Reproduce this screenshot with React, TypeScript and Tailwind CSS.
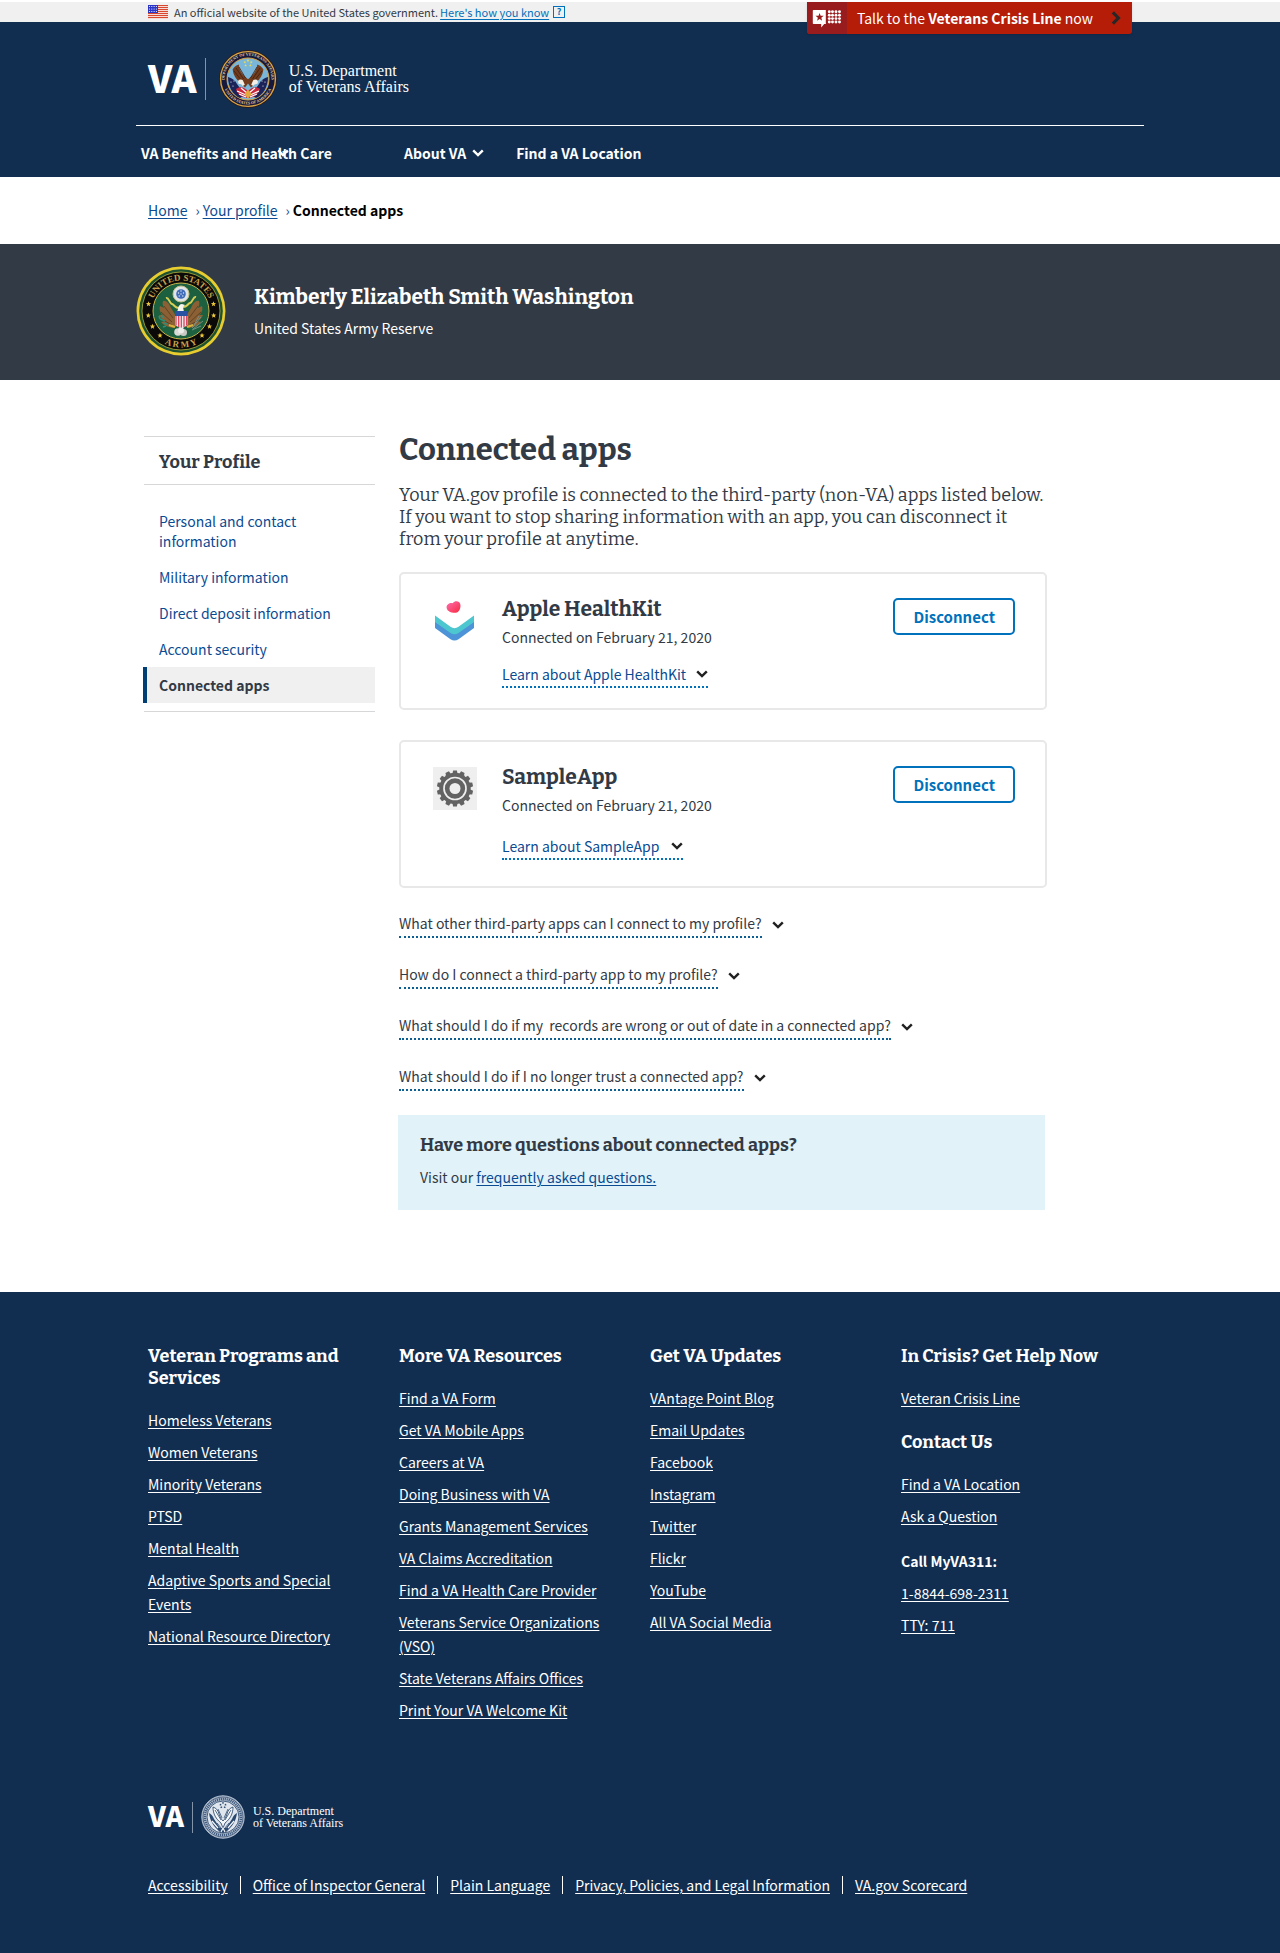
import React from "react";

const SERIF = "font-['Bitter','Noto_Serif','DejaVu_Serif_Condensed',serif]";
const WORDMARK = "font-['Liberation_Serif',serif]";

function Chevron({ className = "" }: { className?: string }) {
  return (
    <svg viewBox="0 0 12 8" className={`h-2 w-3 shrink-0 ${className}`} fill="none" stroke="currentColor" strokeWidth="2.4" aria-hidden="true">
      <path d="M1.2 1.3 6 6.1l4.8-4.8" />
    </svg>
  );
}

function star(cx: number, cy: number, r: number) {
  const pts: string[] = [];
  for (let i = 0; i < 10; i++) {
    const a = -Math.PI / 2 + (i * Math.PI) / 5;
    const q = i % 2 ? r * 0.42 : r;
    pts.push(`${(cx + q * Math.cos(a)).toFixed(2)},${(cy + q * Math.sin(a)).toFixed(2)}`);
  }
  return pts.join(" ");
}

function Flag() {
  return (
    <svg viewBox="0 0 20 14" className="h-3.5 w-5 shrink-0" aria-hidden="true">
      <rect width="20" height="14" fill="#fff" />
      {[0, 2, 4, 6, 8, 10, 12].map((y) => (
        <rect key={y} y={y} width="20" height="1.2" fill="#d8482f" />
      ))}
      <rect width="10" height="8" fill="#2a35c8" />
      {[1.5, 4, 6.5].map((y) =>
        [1.5, 3.8, 6.1, 8.4].map((x) => <circle key={`${x}-${y}`} cx={x} cy={y} r="0.6" fill="#fff" />)
      )}
    </svg>
  );
}

function VaSeal() {
  return (
    <svg viewBox="0 0 58 58" className="size-[58px] shrink-0" role="img" aria-label="Department of Veterans Affairs seal">
      <defs>
        <path id="va-top" d="M5.6 29a23.4 23.4 0 0 1 46.8 0" />
        <path id="va-bottom" d="M3.6 29a25.4 25.4 0 0 0 50.8 0" />
      </defs>
      <circle cx="29" cy="29" r="29" fill="#2a1d22" />
      <circle cx="29" cy="29" r="27.4" fill="#16193c" stroke="#d9a441" strokeWidth="1.4" />
      <circle cx="29" cy="29" r="21" fill="#79b6d9" stroke="#d9a441" strokeWidth="1" />
      <text fill="#e6d3a0" className="font-['Liberation_Serif',serif] text-[4px] font-bold">
        <textPath href="#va-top" startOffset="50%" textAnchor="middle">DEPARTMENT OF VETERANS AFFAIRS</textPath>
      </text>
      <text fill="#e6d3a0" className="font-['Liberation_Serif',serif] text-[4px] font-bold">
        <textPath href="#va-bottom" startOffset="50%" textAnchor="middle">UNITED STATES OF AMERICA</textPath>
      </text>
      {[[29, 10.5], [25.8, 12.2], [32.2, 12.2], [26.6, 15.4], [31.4, 15.4]].map(([x, y]) => (
        <polygon key={`${x}`} points={star(x, y, 1.5)} fill="#f2dd4e" />
      ))}
      <path d="M9 27c4 1 7 3 9 7l8 11-5 3C14 45 9 37 9 27zM49 27c-4 1-7 3-9 7l-8 11 5 3c7-3 12-11 12-21z" fill="#1c2358" />
      {[[12, 32], [14, 36], [46, 32], [44, 36], [15, 31], [43, 31]].map(([x, y]) => (
        <circle key={`${x}-${y}`} cx={x} cy={y} r="0.6" fill="#fff" />
      ))}
      <path d="M17 39c4-3 8-2 12 2 4-4 8-5 12-2-1 5-6 9-12 9s-11-4-12-9z" fill="#c9273b" />
      <path d="m18 41 9 4M20 44l7 3M40 41l-9 4M38 44l-7 3M22 38l6 5M36 38l-6 5" stroke="#fff" strokeWidth="1.2" />
      <path d="M13.6 19.5c1.400-2.500 3.700-4.400 6.200-4.900.5 6 3.700 10.400 9.200 14.600 5.500-4.200 8.700-8.600 9.200-14.600 2.500.5 4.800 2.400 6.200 4.900-.8 5.800-3.200 9.400-6.800 12.600L32 37.500l-3-4-3 4-5.600-5.400c-3.600-3.200-6-6.800-6.800-12.600z" fill="#703c1d" />
      <path d="m17 18 7.500 11M20 17l6.500 11M41 18l-7.500 11M38 17l-6.500 11M15 21l8 10M43 21l-8 10" stroke="#3d1f10" strokeWidth="0.8" />
      <path d="M19 31c.7-1.700 3.500-2.200 4.800-.8l2 4.500-2.100 1.300c-1-1.500-2-2.200-4.200-2.300zM39 31c-.7-1.700-3.500-2.200-4.800-.8l-2 4.500 2.100 1.300c1-1.500 2-2.200 4.200-2.300z" fill="#f3efe6" />
      <path d="m25.500 44 3.500 5 3.500-5-3.500-4.500z" fill="#e3a93a" />
    </svg>
  );
}

function VaSealMono() {
  return (
    <svg viewBox="0 0 44 44" className="size-11 shrink-0" role="img" aria-label="Department of Veterans Affairs seal">
      <circle cx="22" cy="22" r="21.200" fill="#b3bfd0" stroke="#b3bfd0" />
      <circle cx="22" cy="22" r="20" fill="none" stroke="#1f3c61" strokeWidth="0.7" />
      <circle cx="22" cy="22" r="18" fill="none" stroke="#3f5a7e" strokeWidth="2.400" strokeDasharray="1.200 .8" />
      <circle cx="22" cy="22" r="16" fill="#dfe6ee" stroke="#1f3c61" strokeWidth="0.8" />
      <path d="M8 18c1 8 5 14 11 19l3 1 3-1c6-5 10-11 11-19-2 1-4 3-5 6l-6 9h-6l-6-9c-1-3-3-5-5-6z" fill="#2c4a70" />
      <path d="M12 12c0 7 3 12 8 16l2 5 2-5c5-4 8-9 8-16-3 1-5 3-6 7-1 3-2 5-4 7-2-2-3-4-4-7-1-4-3-6-6-7z" fill="#f4f7fa" stroke="#1f3c61" strokeWidth="0.8" />
      <path d="m14 15 6 10M17 14l4 9M30 15l-6 10M27 14l-4 9M13 30l6 5M31 30l-6 5M16 28l4 5M28 28l-4 5" stroke="#2c4a70" strokeWidth="0.8" />
      <path d="M11 26l6 7M33 26l-6 7M20 37l2-4 2 4" stroke="#f4f7fa" strokeWidth="1.200" fill="none" />
      {[[22, 8], [19.5, 9.700], [24.5, 9.700], [20.300, 12.300], [23.700, 12.300]].map(([x, y]) => (
        <polygon key={`${x}`} points={star(x, y, 1.300)} fill="#1f3c61" />
      ))}
    </svg>
  );
}

function ArmySeal() {
  const stars = [[12.5, 38], [12.300, 49.500], [16.500, 60.500], [24, 69.500], [77.500, 38], [77.700, 49.500], [73.500, 60.500], [66, 69.500]];
  return (
    <svg viewBox="0 0 90 90" className="size-[90px] shrink-0" role="img" aria-label="United States Army seal">
      <defs>
        <path id="army-top" d="M14.500 45a30.500 30.500 0 0 1 61 0" />
        <path id="army-bottom" d="M8.500 45a36.500 36.500 0 0 0 73 0" />
      </defs>
      <circle cx="45" cy="45" r="44.500" fill="#e7cd2f" />
      <circle cx="45" cy="45" r="41.800" fill="#1d5131" />
      <circle cx="45" cy="45" r="39" fill="#0b0a08" stroke="#b5b13a" strokeWidth="0.8" />
      <circle cx="45" cy="45" r="28" fill="#1c6040" stroke="#c9b64a" strokeWidth="1" />
      <text fill="#c9a24c" className="font-['Liberation_Serif',serif] text-[9px] font-bold">
        <textPath href="#army-top" startOffset="50%" textAnchor="middle">UNITED STATES</textPath>
      </text>
      <text fill="#c9a24c" className="font-['Liberation_Serif',serif] text-[9px] font-bold">
        <textPath href="#army-bottom" startOffset="50%" textAnchor="middle">A R M Y</textPath>
      </text>
      {stars.map(([x, y]) => (
        <polygon key={`${x}-${y}`} points={star(x, y, 2.800)} fill="#ecc73a" />
      ))}
      <path d="M27 35c3-1 6 2 8 7l5 8 1 10-4 2c-6-1-10-3-12-6l4-1c-3-1-5-4-6-6l4 0c-3-2-4-6-3-9l4 2c-1-2-2-5-1-7zM63 35c-3-1-6 2-8 7l-5 8-1 10 4 2c6-1 10-3 12-6l-4-1c3-1 5-4 6-6l-4 0c3-2 4-6 3-9l-4 2c1-2 2-5 1-7z" fill="#8a6034" />
      <path d="m28 40 9 12M25 46l11 10M27 54l9 5M62 40l-9 12M65 46 54 56M63 54l-9 5" stroke="#5e3f22" strokeWidth="0.9" />
      <path d="M30 32c3-1 3 5 6 6s3 5 8 4M60 31c-3-1-3 5-6 6s-3 5-8 4" stroke="#d9cf55" strokeWidth="2" fill="none" />
      <circle cx="45" cy="28" r="8" fill="#dfe4e6" stroke="#c2c08a" strokeWidth="1" />
      <circle cx="45" cy="28" r="4.800" fill="#3f6cb8" />
      {[[45, 25], [42.500, 27], [47.500, 27], [43.200, 30], [46.800, 30], [45, 28]].map(([x, y]) => (
        <circle key={`${x}-${y}`} cx={x} cy={y} r="0.7" fill="#dfe8f5" />
      ))}
      <path d="M42 43c0-3 2-5 4-5l3 1-2 2 1 5h-7z" fill="#f6f5ef" />
      <path d="M39 45h12.500v5H39z" fill="#2a52a3" />
      <path d="M39 50h12.500v9l-6 4-6.500-4z" fill="#f5e6ea" />
      <path d="M40 50v9.500M42.700 50v11M45.300 50v12.500M48 50v11M50.700 50v9.500" stroke="#d83a56" strokeWidth="1.200" />
      <path d="m33 59 6 2M57 59l-6 2" stroke="#d7b23c" strokeWidth="2.200" />
      <circle cx="42" cy="66" r="3.800" fill="#d9d9d6" />
      <circle cx="47.500" cy="66.500" r="3.500" fill="#c8c8c5" />
      <circle cx="45" cy="64.500" r="3" fill="#ececea" />
      <path d="M25 49l3 3M24 53l5 2M27 57l4 1M30 60l-3 1M23 50l1 3" stroke="#2f8c78" strokeWidth="1.500" />
      <path d="m56 62 9-11M57 63l10-8M57 61l6-11M56 64l9-4" stroke="#7c938a" strokeWidth="0.9" />
    </svg>
  );
}

function HealthIcon() {
  return (
    <svg viewBox="0 0 44 43" className="h-[43px] w-11" aria-hidden="true">
      <defs>
        <linearGradient id="heart" x1="0" y1="0" x2="1" y2="1">
          <stop offset="0" stopColor="#fb6fb0" />
          <stop offset="1" stopColor="#f9293f" />
        </linearGradient>
      </defs>
      <path d="M13.800 9.500c-1.200-3.200 2.400-6.200 6-5.200 2.200-3.200 6.900-2.300 7.500 1 .7 3.400-.8 6.900-3.400 8.300-3.900.9-9.100-.6-10.100-4.100z" fill="url(#heart)" />
      <path d="M2 22.500 17.500 33q4 2.700 8 0L41 22.500v6.500L25.500 40.200q-4 2.700-8 0L2 29z" fill="#4c93d8" />
      <path d="M2 16.500 17.500 27.800q4 2.700 8 0L41 16.500v6.500L25.500 34q-4 2.700-8 0L2 23z" fill="#4cc6cf" />
    </svg>
  );
}

function GearIcon() {
  return (
    <svg viewBox="0 0 44 43" className="h-[43px] w-11" aria-hidden="true">
      <rect width="44" height="43" fill="#f0eff0" />
      <g fill="#636363">
        {Array.from({ length: 14 }, (_, i) => (
          <path key={i} d="m19.200 8 .9-4.600h3.800l.9 4.600z" transform={`rotate(${(i * 360) / 14} 22 21.500)`} />
        ))}
        <circle cx="22" cy="21.500" r="15.700" />
      </g>
      <circle cx="22" cy="21.500" r="11" fill="none" stroke="#f0eff0" strokeWidth="1.700" />
      <circle cx="22" cy="21.500" r="5.500" fill="#f0eff0" />
    </svg>
  );
}

function CrisisIcon() {
  return (
    <svg viewBox="0 0 30 19" className="h-[19px] w-[30px]" fill="#fff" aria-hidden="true">
      <path d="M1.500 1h12.300v14h-1.600l-3 3.600V15H1.500Q.8 15 .8 14.300V1.700Q.8 1 1.500 1z" />
      <polygon points={star(7.600, 8.200, 4.300)} fill="#981b1e" />
      {[2.800, 6.200, 9.600, 13].map((y) => [17.300, 20.500, 24, 27.500].map((x) => <circle key={`${x}-${y}`} cx={x} cy={y} r="1.450" />))}
    </svg>
  );
}

const sideLinks = ["Personal and contact information", "Military information", "Direct deposit information", "Account security"];
const faqs = [
  "What other third-party apps can I connect to my profile?",
  "How do I connect a third-party app to my profile?",
  "What should I do if my\u00a0 records are wrong or out of date in a connected app?",
  "What should I do if I no longer trust a connected app?",
];
const programs = ["Homeless Veterans", "Women Veterans", "Minority Veterans", "PTSD", "Mental Health", "Adaptive Sports and Special Events", "National Resource Directory"];
const resources = ["Find a VA Form", "Get VA Mobile Apps", "Careers at VA", "Doing Business with VA", "Grants Management Services", "VA Claims Accreditation", "Find a VA Health Care Provider", "Veterans Service Organizations (VSO)", "State Veterans Affairs Offices", "Print Your VA Welcome Kit"];
const updates = ["VAntage Point Blog", "Email Updates", "Facebook", "Instagram", "Twitter", "Flickr", "YouTube", "All VA Social Media"];
const legal = ["Accessibility", "Office of Inspector General", "Plain Language", "Privacy, Policies, and Legal Information", "VA.gov Scorecard"];

function FooterHeading({ children }: { children: React.ReactNode }) {
  return <h2 className={`${SERIF} text-lg leading-[22px] font-bold`}>{children}</h2>;
}

function LinkList({ items }: { items: string[] }) {
  return (
    <ul className="mt-[19px] flex flex-col gap-2">
      {items.map((t) => (
        <li key={t}>
          <a href="#" className="underline underline-offset-2">{t}</a>
        </li>
      ))}
    </ul>
  );
}

function AppCard({ name, icon, roomy = false }: { name: string; icon: React.ReactNode; roomy?: boolean }) {
  return (
    <section className={`flex items-start rounded-[5px] border-2 border-[#e8e8e8] pt-[21px] pr-[30px] pl-8 ${roomy ? "pb-[26px]" : "pb-5"}`}>
      <div className="mt-1 shrink-0">{icon}</div>
      <div className="ml-[25px] flex-1">
        <h2 className={`${SERIF} text-[21px] leading-7 font-bold`}>{name}</h2>
        <p className="mt-0.5">Connected on February 21, 2020</p>
        <button
          type="button"
          className={`flex items-center border-b-2 border-dotted border-[#0071bb] text-[#0a4b92] ${roomy ? "mt-[17px] gap-3" : "mt-[13px] gap-2.5"}`}
        >
          Learn about {name}
          <Chevron className="text-[#212121]" />
        </button>
      </div>
      <button type="button" className="mt-[3px] h-[37px] rounded-[5px] border-2 border-[#0071bb] px-[18px] text-[15px] font-bold text-[#0071bb]">
        Disconnect
      </button>
    </section>
  );
}

export default function App() {
  return (
    <div className="bg-white pt-0.5 font-['Noto_Sans_CJK_SC','Noto_Sans',sans-serif] text-sm leading-6 text-[#323a45]">
      <div className="relative bg-[#f0f0f0]">
        <div className="mx-auto flex h-5 max-w-[984px] items-center pb-px text-[11px]">
          <Flag />
          <span className="ml-1.5">An official website of the United States government.</span>
          <a href="#" className="ml-0.5 text-[#0071bb] underline underline-offset-2">Here's how you know</a>
          <span className="ml-1 flex size-3 items-center justify-center border border-[#0071bb] text-[9px] leading-none font-bold text-[#0071bb]">?</span>
        </div>
        <div className="absolute inset-x-0 top-0 z-10 mx-auto flex max-w-[984px] justify-end">
          <a href="#" className="flex h-8 items-stretch overflow-hidden rounded-b-[3px] bg-[#b51d09] text-white shadow">
            <span className="flex w-10 items-center justify-center bg-[#981b1e]">
              <CrisisIcon />
            </span>
            <span className="flex items-center pr-[11px] pl-2.5">
              <span>Talk to the <strong>Veterans Crisis Line</strong> now</span>
              <svg viewBox="0 0 10 14" className="ml-[18px] h-3.5 w-2.5" fill="none" stroke="#2b2626" strokeWidth="3.200" aria-hidden="true">
                <path d="m1.800 1.300 5.600 5.700-5.600 5.700" />
              </svg>
            </span>
          </a>
        </div>
      </div>

      <header className="bg-[#112e51] text-white">
        <div className="mx-auto max-w-[1008px]">
          <div className="flex h-26 items-center border-b border-white pt-2.5 pl-3">
            <span className="pb-1 text-[38px] leading-none font-black">VA</span>
            <span className="ml-2 h-[42px] w-px bg-[#8494a8]" />
            <span className="ml-[13px]">
              <VaSeal />
            </span>
            <span className={`${WORDMARK} ml-3 text-base leading-4`}>
              U.S. Department
              <br />
              of Veterans Affairs
            </span>
          </div>
          <nav className="flex h-[51px] items-center pt-0.5 pl-[5px] font-bold">
            <button type="button" className="relative w-[263px] text-left">
              VA Benefits and Health Care
              <Chevron className="absolute top-2 left-[136px]" />
            </button>
            <button type="button" className="flex items-center gap-1.5">
              About VA
              <Chevron />
            </button>
            <a href="#" className="ml-8">Find a VA Location</a>
          </nav>
        </div>
      </header>

      <nav aria-label="Breadcrumb" className="mx-auto flex h-[67px] max-w-[984px] items-center gap-[3px] pb-0.5 text-[#0a4b92]">
        <a href="#" className="underline underline-offset-2">Home</a>
        <span className="ml-[5px]">›</span>
        <a href="#" className="underline underline-offset-2">Your profile</a>
        <span className="ml-[5px]">›</span>
        <strong className="text-black">Connected apps</strong>
      </nav>

      <div className="bg-[#323a45] text-white">
        <div className="mx-auto flex h-[136px] max-w-[1008px] items-center pb-0.5">
          <ArmySeal />
          <div className="ml-7">
            <p className={`${SERIF} text-[21px] leading-7 font-bold`}>Kimberly Elizabeth Smith Washington</p>
            <p className="mt-[5px]">United States Army Reserve</p>
          </div>
        </div>
      </div>

      <div className="mx-auto flex max-w-[984px] items-start pt-[52px] pb-[82px]">
        <aside className="mt-1 -ml-1 w-[231px] shrink-0 border-y border-[#d6d7d9] pb-2">
          <h2 className={`${SERIF} border-b border-[#d6d7d9] pt-3.5 pb-[11px] pl-[15px] text-lg leading-[22px] font-bold`}>Your Profile</h2>
          <ul className="mt-[18px] leading-5">
            {sideLinks.map((t) => (
              <li key={t}>
                <a href="#" className="block py-2 pr-9 pl-[15px] text-[#0a4b92]">{t}</a>
              </li>
            ))}
            <li>
              <a href="#" aria-current="page" className="-ml-px block border-l-4 border-[#003e73] bg-[#f0f0f0] py-2 pl-3 font-bold">Connected apps</a>
            </li>
          </ul>
        </aside>

        <main className="ml-6 max-w-[648px] flex-1">
          <h1 className={`${SERIF} text-[31px] leading-9 font-bold`}>Connected apps</h1>
          <p className={`${SERIF} mt-4 text-lg leading-[22px]`}>
            Your VA.gov profile is connected to the third-party (non-VA) apps listed below. If you want to stop sharing information with an app, you can disconnect it from your profile at anytime.
          </p>
          <div className="mt-[22px] flex flex-col gap-[30px]">
            <AppCard name="Apple HealthKit" icon={<HealthIcon />} />
            <AppCard name="SampleApp" icon={<GearIcon />} roomy />
          </div>
          <div className="mt-[23px] flex flex-col items-start gap-6">
            {faqs.map((q) => (
              <button key={q} type="button" className="flex items-center gap-2.5 text-left">
                <span className="border-b-2 border-dotted border-[#0b5f93] pb-px">{q}</span>
                <Chevron className="text-[#212121]" />
              </button>
            ))}
          </div>
          <section className="mt-6 mr-0.5 -ml-px bg-[#e1f2f8] pt-[19px] pb-[21px] pl-[22px]">
            <h2 className={`${SERIF} text-lg leading-[22px] font-bold`}>Have more questions about connected apps?</h2>
            <p className="mt-[9px]">
              Visit our <a href="#" className="text-[#0a4b92] underline underline-offset-2">frequently asked questions.</a>
            </p>
          </section>
        </main>
      </div>

      <footer className="bg-[#112e51] text-white">
        <div className="mx-auto max-w-[984px] pt-[53px] pb-14">
          <div className="grid grid-cols-4 gap-5">
            <div className="pr-5">
              <FooterHeading>Veteran Programs and Services</FooterHeading>
              <LinkList items={programs} />
            </div>
            <div className="pr-5">
              <FooterHeading>More VA Resources</FooterHeading>
              <LinkList items={resources} />
            </div>
            <div>
              <FooterHeading>Get VA Updates</FooterHeading>
              <LinkList items={updates} />
            </div>
            <div>
              <FooterHeading>In Crisis? Get Help Now</FooterHeading>
              <LinkList items={["Veteran Crisis Line"]} />
              <div className="mt-[21px]">
                <FooterHeading>Contact Us</FooterHeading>
              </div>
              <LinkList items={["Find a VA Location", "Ask a Question"]} />
              <p className="mt-[21px] font-bold">Call MyVA311:</p>
              <ul className="mt-2 flex flex-col gap-2">
                <li><a href="#" className="underline underline-offset-2">1-8844-698-2311</a></li>
                <li><a href="#" className="underline underline-offset-2">TTY: 711</a></li>
              </ul>
            </div>
          </div>
          <div className="mt-[73px] flex items-center">
            <span className="pb-1 text-[28px] leading-none font-black">VA</span>
            <span className="ml-2 h-[31px] w-px bg-[#8494a8]" />
            <span className="ml-2">
              <VaSealMono />
            </span>
            <span className={`${WORDMARK} ml-2 text-xs leading-3`}>
              U.S. Department
              <br />
              of Veterans Affairs
            </span>
          </div>
          <ul className="mt-[34px] flex flex-wrap">
            {legal.map((t, i) => (
              <li key={t} className="flex items-center">
                {i > 0 && <span className="mx-3 h-[18px] w-px bg-white" />}
                <a href="#" className="underline underline-offset-2">{t}</a>
              </li>
            ))}
          </ul>
        </div>
      </footer>
    </div>
  );
}
